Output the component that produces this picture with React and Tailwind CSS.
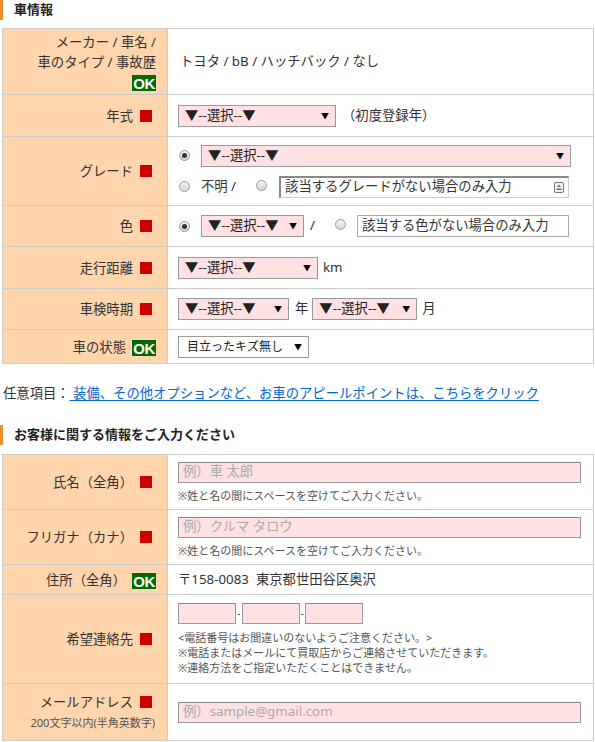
const FONT = { fontFamily: '"Noto Sans", "Noto Sans CJK JP", sans-serif' };

function Req() {
  return <span className="inline-block w-3 h-3 bg-[#cc0000] ml-[7px] mr-[4px] align-[-1px]" />;
}

function Ok({ className = "" }) {
  return (
    <span
      className={`inline-flex items-center justify-center w-[24px] h-[16px] bg-[#006a00] text-white font-bold text-[15px] leading-none align-[-2px] ${className}`}
      style={{ fontFamily: '"Liberation Sans", Arial, sans-serif', letterSpacing: "-0.5px" }}
    >
      OK
    </span>
  );
}

function Radio({ checked }) {
  return (
    <span className="inline-flex items-center justify-center w-[11px] h-[11px] rounded-full border border-[#9a9a9a] bg-gradient-to-b from-[#f4f4f4] to-[#d6d6d6] shrink-0">
      {checked && <span className="w-[5px] h-[5px] rounded-full bg-[#333]" />}
    </span>
  );
}

function Select({ w, label = "▼--選択--▼", pink = true, small = false }) {
  return (
    <div
      className={`flex items-center justify-between h-[22px] border border-[#9a9a9a] pr-[6px] text-[#222] shrink-0 ${
        pink ? "bg-[#ffe0e3]" : "bg-white"
      } ${small ? "pl-[8px] text-[12px]" : "pl-[6px] text-[13.33px]"}`}
      style={{ width: w }}
    >
      <span className="leading-none whitespace-nowrap">{label}</span>
      <span className="text-[8px] leading-none text-black">▼</span>
    </div>
  );
}

function TextBox({ w, text, icon = false, inset = false }) {
  return (
    <div
      className={`flex items-center justify-between h-[22px] bg-white pl-[4px] pr-[4px] text-[13.33px] text-[#333] ${
        inset
          ? "border border-[#ccc] border-t-2 border-l-2 border-t-[#888] border-l-[#888]"
          : "border border-[#aaa]"
      }`}
      style={{ width: w }}
    >
      <span className="leading-none whitespace-nowrap">{text}</span>
      {icon && (
        <svg width="10" height="11" viewBox="0 0 10 11" className="shrink-0">
          <rect x="0.5" y="0.5" width="9" height="10" rx="1.5" fill="#f2f2f2" stroke="#777" />
          <path d="M5 2.5 L7 5 H3 Z" fill="#666" />
          <rect x="2.5" y="6.5" width="5" height="1.5" fill="#666" />
        </svg>
      )}
    </div>
  );
}

function PinkInput({ w = 403, placeholder = "" }) {
  return (
    <div
      className="flex items-center h-[21px] bg-[#ffe0e3] border border-[#999] border-t-[#888] pl-[4px] text-[13.33px] text-[#aaa]"
      style={{ width: w }}
    >
      <span className="leading-none whitespace-nowrap">{placeholder}</span>
    </div>
  );
}

function Heading({ children }) {
  return (
    <div className="flex items-center h-[20px] border-l-[3px] border-[#f18d2c] pl-[11px] text-[13px] font-bold text-[#222]">
      {children}
    </div>
  );
}

function Row({ h, label, children }) {
  return (
    <tr style={{ height: h }}>
      <th className="w-[165px] bg-[#ffd5ae] border border-[#cccccc] text-right align-middle pr-[11px] font-normal text-[13.33px] text-[#333] leading-[20px]">
        {label}
      </th>
      <td className="border border-[#cccccc] align-middle pl-[10px] text-[13.33px] text-[#333]">
        {children}
      </td>
    </tr>
  );
}

export default function App() {
  return (
    <div className="w-[595px] h-[742px] bg-white overflow-hidden" style={FONT}>
      <Heading>車情報</Heading>

      <table className="ml-[2px] mt-[8px] w-[592px] border-collapse table-fixed">
        <tbody>
          <Row
            h={66}
            label={
              <>
                メーカー / 車名 /<br />
                車のタイプ / 事故歴
                <br />
                <Ok />
              </>
            }
          >
            <span className="pl-[2px]">トヨタ / bB / ハッチバック / なし</span>
          </Row>
          <Row
            h={42}
            label={
              <>
                年式
                <Req />
              </>
            }
          >
            <div className="flex items-center gap-[6px]">
              <Select w={158} />
              <span>（初度登録年）</span>
            </div>
          </Row>
          <Row
            h={69}
            label={
              <>
                グレード
                <Req />
              </>
            }
          >
            <div className="flex flex-col gap-[9px] pl-[1px]">
              <div className="flex items-center gap-[11px]">
                <Radio checked />
                <Select w={370} />
              </div>
              <div className="flex items-center">
                <Radio />
                <span className="ml-[11px]">不明 /</span>
                <span className="ml-[20px]">
                  <Radio />
                </span>
                <span className="ml-[12px]">
                  <TextBox w={290} text="該当するグレードがない場合のみ入力" icon inset />
                </span>
              </div>
            </div>
          </Row>
          <Row
            h={41}
            label={
              <>
                色
                <Req />
              </>
            }
          >
            <div className="flex items-center pl-[1px]">
              <Radio checked />
              <span className="ml-[11px]">
                <Select w={103} />
              </span>
              <span className="ml-[6px]">/</span>
              <span className="ml-[20px]">
                <Radio />
              </span>
              <span className="ml-[11px]">
                <TextBox w={212} text="該当する色がない場合のみ入力" />
              </span>
            </div>
          </Row>
          <Row
            h={42}
            label={
              <>
                走行距離
                <Req />
              </>
            }
          >
            <div className="flex items-center gap-[5px]">
              <Select w={140} />
              <span>km</span>
            </div>
          </Row>
          <Row
            h={41}
            label={
              <>
                車検時期
                <Req />
              </>
            }
          >
            <div className="flex items-center">
              <Select w={111} />
              <span className="ml-[6px]">年</span>
              <span className="ml-[4px]">
                <Select w={105} />
              </span>
              <span className="ml-[5px]">月</span>
            </div>
          </Row>
          <Row
            h={34}
            label={
              <>
                車の状態
                <Ok className="ml-[6px]" />
              </>
            }
          >
            <Select w={131} label="目立ったキズ無し" pink={false} small />
          </Row>
        </tbody>
      </table>

      <p className="mt-[19px] ml-[3px] h-[20px] leading-[20px] text-[13.33px] text-[#333]">
        任意項目：
        <a href="#" className="text-[#0066cc] underline underline-offset-2">
          {" "}
          装備、その他オプションなど、お車のアピールポイントは、こちらをクリック
        </a>
      </p>

      <div className="mt-[22px]">
        <Heading>お客様に関する情報をご入力ください</Heading>
      </div>

      <table className="ml-[2px] mt-[9px] w-[592px] border-collapse table-fixed">
        <tbody>
          <Row
            h={55}
            label={
              <>
                氏名（全角）
                <Req />
              </>
            }
          >
            <div className="flex flex-col gap-[6px]">
              <PinkInput placeholder="例）車 太郎" />
              <span className="text-[11px] leading-[14px] text-[#555]">
                ※姓と名の間にスペースを空けてご入力ください。
              </span>
            </div>
          </Row>
          <Row
            h={55}
            label={
              <>
                フリガナ（カナ）
                <Req />
              </>
            }
          >
            <div className="flex flex-col gap-[6px]">
              <PinkInput placeholder="例）クルマ タロウ" />
              <span className="text-[11px] leading-[14px] text-[#555]">
                ※姓と名の間にスペースを空けてご入力ください。
              </span>
            </div>
          </Row>
          <Row
            h={30}
            label={
              <>
                住所（全角）
                <Ok className="ml-[6px]" />
              </>
            }
          >
            〒158-0083&nbsp;&nbsp;東京都世田谷区奥沢
          </Row>
          <Row
            h={89}
            label={
              <>
                希望連絡先
                <Req />
              </>
            }
          >
            <div className="flex flex-col">
              <div className="flex items-center text-[11px] text-[#555]">
                <PinkInput w={58} />
                <span className="px-[1px]">-</span>
                <PinkInput w={58} />
                <span className="px-[1px]">-</span>
                <PinkInput w={58} />
              </div>
              <div className="mt-[6px] text-[11px] leading-[15px] text-[#555]">
                &lt;電話番号はお間違いのないようご注意ください。&gt;
                <br />
                ※電話またはメールにて買取店からご連絡させていただきます。
                <br />
                ※連絡方法をご指定いただくことはできません。
              </div>
            </div>
          </Row>
          <Row
            h={57}
            label={
              <>
                メールアドレス
                <Req />
                <br />
                <span className="text-[11px] leading-[20px] text-[#555] pr-[1px]">200文字以内(半角英数字)</span>
              </>
            }
          >
            <PinkInput placeholder="例）sample@gmail.com" />
          </Row>
        </tbody>
      </table>
    </div>
  );
}
